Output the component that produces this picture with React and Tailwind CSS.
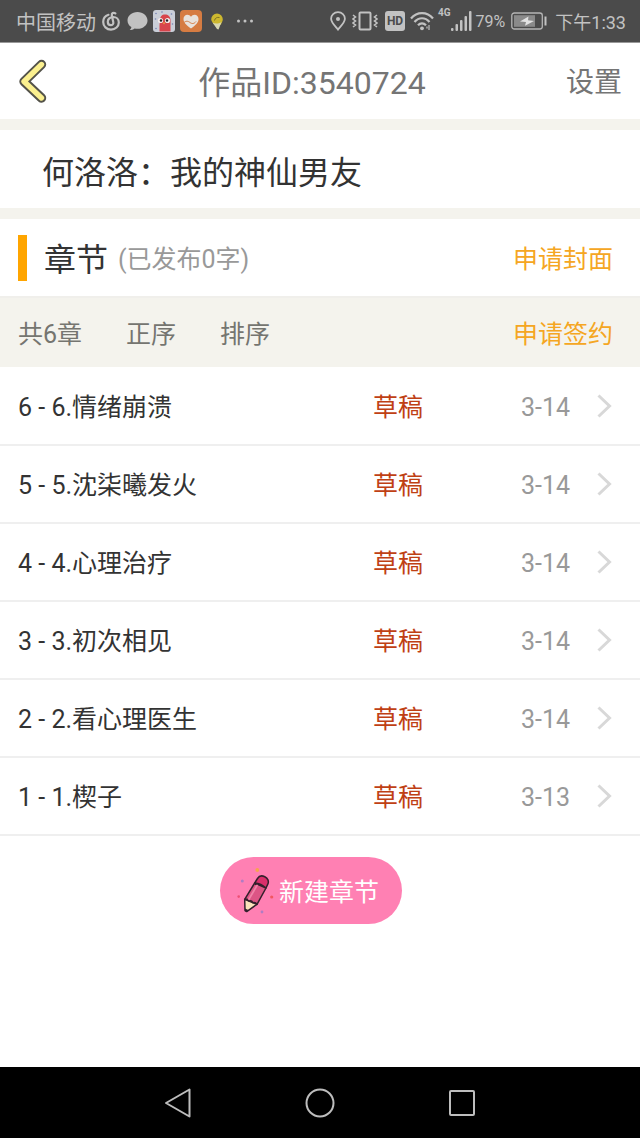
const chapters = [
  { no: 6, title: "6.情绪崩溃", status: "草稿", date: "3-14" },
  { no: 5, title: "5.沈柒曦发火", status: "草稿", date: "3-14" },
  { no: 4, title: "4.心理治疗", status: "草稿", date: "3-14" },
  { no: 3, title: "3.初次相见", status: "草稿", date: "3-14" },
  { no: 2, title: "2.看心理医生", status: "草稿", date: "3-14" },
  { no: 1, title: "1.楔子", status: "草稿", date: "3-13" },
]

function StatusBar() {
  return (
    <div className="flex h-[42px] items-center justify-between bg-[#4b4b4b] pl-4 pr-[14px] text-[#c2c2c2]">

      <div className="flex items-center">
        <span className="pt-1 text-[20px] leading-6">中国移动</span>

        {/* music */}
        <svg className="ml-1.5 h-5 w-[18px]" viewBox="0 0 18 20" fill="none" stroke="currentColor" strokeWidth="2.200" strokeLinecap="round">
          <path d="M6.500 3.800C3.400 4.800 1.200 7.600 1.200 11c0 4.300 3.400 7.600 7.800 7.600s7.800-3.100 7.800-7.100c0-3.200-2.400-5.500-5.600-5.500-3.200 0-5.400 2-5.400 4.700 0 2.200 1.400 3.500 3 3.500s2.800-1.200 2.500-2.900L9.800 4.300C9.500 2.300 11.500 1 13.400 2.400" />
        </svg>

        {/* message bubble */}
        <svg className="ml-[7px] h-5 w-[21px]" viewBox="0 0 21 20" fill="currentColor">
          <path d="M10.500 1C4.800 1 .5 4.700.5 9.400c0 2.900 1.500 5.200 3.900 6.700-.2 1.200-.9 2.300-1.700 3 1.900-.1 3.600-.7 4.900-1.700.9.2 1.900.3 2.900.3 5.700 0 10-3.700 10-8.300S16.200 1 10.500 1z" />
        </svg>

        {/* bird app */}
        <svg className="ml-[5px] h-[22px] w-[22px]" viewBox="0 0 22 22">
          <rect width="22" height="22" rx="3" fill="#c9ced8" />
          <path d="M7 10c0-3.500 2-5.500 5-5.500s5.500 2 5.500 5.500v11.500H6.500V15z" fill="#d8454c" />
          <circle cx="7.500" cy="10.500" r="2.600" fill="#f3e9e9" />
          <circle cx="14.500" cy="10.500" r="2.600" fill="#f3e9e9" />
          <circle cx="8" cy="10.500" r="1.200" fill="#222" />
          <circle cx="14" cy="10.500" r="1.200" fill="#222" />
          <path d="M9.500 12.500h3l-1.500 2z" fill="#e9a23b" />
          <g fill="#7684b5">
            <circle cx="3" cy="3.500" r=".8" />
            <circle cx="9" cy="2" r=".8" />
            <circle cx="18.500" cy="4" r=".8" />
            <circle cx="2.500" cy="9" r=".8" />
            <circle cx="19.500" cy="14" r=".8" />
            <circle cx="3" cy="18.500" r=".8" />
          </g>
        </svg>

        {/* health app */}
        <svg className="ml-[5px] h-[22px] w-[22px]" viewBox="0 0 22 22">
          <rect width="22" height="22" rx="4" fill="#d67c42" />
          <path d="M11 18.500C6 15 3.500 12.300 3.500 9c0-2.500 1.700-4.300 3.900-4.300 1.500 0 2.800.8 3.600 2 .8-1.200 2.100-2 3.600-2 2.200 0 3.900 1.800 3.900 4.300 0 3.300-2.500 6-7.500 9.500z" fill="#e8e2dc" />
          <path d="M3.500 13c2.500-2.500 4.500-2 6.500-.5s4 1.500 6-1" fill="none" stroke="#d67c42" strokeWidth="1" />
        </svg>

        {/* bulb */}
        <svg className="ml-2 h-[18px] w-[14px]" viewBox="0 0 14 18">
          <path d="M7 1.500a5.800 5.800 0 0 1 5.800 5.800c0 2.200-1.300 3.500-1.800 5.200L8 14l-4-1.500C3 11 1.200 9.500 1.200 7.300A5.800 5.800 0 0 1 7 1.500z" fill="#cdb82f" />
          <path d="M2.500 10.500c2.500 1.500 6 1.500 9-.5L8.500 17.500l-1.500-.5z" fill="#d8d8b4" />
          <path d="M4.500 8.500C5 6 7 5 9.500 5.500" fill="none" stroke="#7d7124" strokeWidth="1" />
        </svg>

        <svg className="ml-3 h-1 w-[18px]" viewBox="0 0 18 4" fill="currentColor">
          <circle cx="2.500" cy="2" r="1.500" />
          <circle cx="9" cy="2" r="1.500" />
          <circle cx="15.500" cy="2" r="1.500" />
        </svg>
      </div>

      <div className="flex items-center">
        {/* location */}
        <svg className="h-5 w-4" viewBox="0 0 16 20" fill="none" stroke="currentColor" strokeWidth="1.800">
          <path d="M8 18.600C4.500 14.500 1.100 11.300 1.100 7.800 1.100 4 4.100 1.200 8 1.200s6.900 2.800 6.900 6.600c0 3.500-3.400 6.700-6.900 10.800z" />
          <circle cx="8" cy="8" r="2" fill="currentColor" stroke="none" />
        </svg>

        {/* vibrate */}
        <svg className="ml-1.5 h-5 w-[26px]" viewBox="0 0 26 20" fill="none" stroke="currentColor" strokeWidth="2">
          <rect x="7.500" y="1.500" width="11" height="17" rx="1" />
          <path d="M1 4l2.500 2L1 8l2.500 2L1 12l2.500 2L1 16M25 4l-2.500 2L25 8l-2.500 2 2.500 2-2.500 2 2.500 2" strokeWidth="1.600" />
        </svg>

        <span className="ml-[7px] flex h-5 w-5 items-center justify-center rounded-[3px] bg-[#c2c2c2] text-[12px] font-bold leading-none text-[#4b4b4b]">
          HD
        </span>

        {/* wifi */}
        <svg className="ml-[5px] h-5 w-6" viewBox="0 0 24 20" fill="none" stroke="currentColor" strokeWidth="2.200">
          <path d="M1 7.500C7 .2 17 .2 23 7.500M4.500 11c4.300-5 10.700-5 15 0M8 14.300c2.300-2.600 5.700-2.600 8 0" />
          <circle cx="12" cy="17.300" r="1.900" fill="currentColor" stroke="none" />
          <path d="M19 14v5M17 15.500v2" strokeWidth="1.200" />
        </svg>

        <span className="ml-1 self-start text-[10px] font-bold leading-3">4G</span>

        {/* signal */}
        <svg className="h-5 w-[21px]" viewBox="0 0 21 20" fill="currentColor">
          <rect x="0" y="17" width="2.500" height="3" rx="1" />
          <rect x="4.500" y="13" width="2.500" height="7" rx="1" />
          <rect x="9" y="9" width="2.500" height="11" rx="1" />
          <rect x="13.500" y="5" width="2.500" height="15" rx="1" />
          <rect x="18" y="0" width="2.500" height="20" rx="1" />
        </svg>

        <span className="ml-1 pt-0.5 text-[16px] leading-6">79%</span>

        {/* battery */}
        <svg className="ml-1.5 h-[18px] w-9" viewBox="0 0 36 18" fill="none">
          <rect x=".8" y="1" width="30.500" height="16" rx="2.500" stroke="#b5b5b5" strokeWidth="1.300" />
          <rect x="3" y="3.200" width="21" height="11.600" fill="#8a8a8a" />
          <path d="M17.500 4.500L9 9.500l6 .5-1 3.800L23 9l-6-.8z" fill="#e2e2e2" />
          <path d="M34.500 4.500v9" stroke="#c2c2c2" strokeWidth="2" />
        </svg>

        <span className="ml-2 pt-1 text-[18px] leading-6">下午1:33</span>
      </div>

    </div>
  )
}

function PencilIcon() {
  return (
    <svg className="h-[48px] w-10" viewBox="0 0 40 48">
      <g strokeLinejoin="round" stroke="#33202c" strokeWidth="1.500">
        <path d="M9.700 32.300L22 37.300 11.700 44.600 10 43.500z" fill="#fbe3bb" />
        <path d="M9.700 32.300L19.700 16 31 21 22 37.300c-1-1.500-2.500-2-4-1.500-.8-1.500-2.500-2.300-4-1.700-1-1.600-2.700-2.300-4.300-1.800z" fill="#dc5585" />
        <path d="M19.700 16l2.800-4.500C24 9 27 8.400 29.800 9.700c3 1.400 4.400 4.600 3 7.500L31 21c-3-2.800-7-4.600-11.300-5z" fill="#d92f6b" />
      </g>
      <path d="M10 41.500l3.300 1.400-1.800 2L10 43.800z" fill="#33202c" />
      <path d="M14 32l8-13.500" stroke="#f083a8" strokeWidth="1.800" strokeLinecap="round" />
      <circle cx="22.300" cy="3" r="1.900" fill="#f7a34e" />
      <circle cx="7.300" cy="14" r="1.500" fill="#b07bc4" />
      <circle cx="3.700" cy="29.600" r="1.300" fill="#ee4f74" />
      <circle cx="36.700" cy="30" r="1.600" fill="#f2565f" />
      <circle cx="27" cy="45" r="1.400" fill="#b07bc4" />
    </svg>
  )
}

function App() {
  return (
    <div className="flex min-h-screen flex-col bg-white font-[Roboto,'Noto_Sans_CJK_SC',sans-serif] text-[25px] leading-8 text-[#333]">

      <StatusBar />

      {/* Header */}
      <header className="flex h-[77px] items-center justify-between border-t border-[#999] bg-white px-[18px] text-[#757575]">
        <button aria-label="返回" className="w-10">
          <svg className="h-11 w-[30px]" viewBox="0 0 30 44" fill="none" strokeLinecap="round" strokeLinejoin="round">
            <path d="M23.500 5.500L6 22.500 23.500 39" stroke="#54534a" strokeWidth="9.400" />
            <path d="M23.500 5.500L6 22.500 23.500 39" stroke="#fbf08f" strokeWidth="5.400" />
          </svg>
        </button>
        <h1 className="pt-1 text-[32px] leading-10">作品ID:3540724</h1>
        <button className="pt-1 text-[28px] leading-10">设置</button>
      </header>

      {/* Book title */}
      <div className="border-y-[11px] border-[#f4f3ed] pl-[42px]">
        <h2 className="flex h-[78px] items-center pt-2 text-[32px] leading-10">何洛洛：我的神仙男友</h2>
      </div>

      {/* Chapter heading */}
      <div className="flex h-[77px] items-center pl-[18px] pr-[27px]">
        <span className="h-[46px] w-[9px] bg-[#ffa500]" />
        <h3 className="ml-[17px] pt-1 text-[32px] leading-10">章节</h3>
        <span className="ml-2.5 pt-1 text-[#999]">(已发布0字)</span>
        <a href="#cover" className="ml-auto pt-1 text-[#f5a623]">申请封面</a>
      </div>

      <div className="flex h-[71px] items-center gap-11 border-t-2 border-[#f0efeb] bg-[#f4f3ed] pl-[18px] pr-[27px] pt-1 text-[#757570]">
        <span>共6章</span>
        <button>正序</button>
        <button>排序</button>
        <a href="#sign" className="ml-auto text-[#f5a623]">申请签约</a>
      </div>

      {/* Chapter list */}
      <ul className="pt-px">
        {chapters.map((item) => (
          <li key={item.no} className="border-b-2 border-[#efefef]">
            <a href={`#chapter-${item.no}`} className="flex h-[76px] items-center pr-7 pl-[18px]">
              <span className="flex-1 pt-1">{item.no} - {item.title}</span>
              <span className="w-[148px] pt-1 text-[#bf4014]">{item.status}</span>
              <span className="w-[76px] pt-1 text-[#999]">{item.date}</span>
              <svg className="h-6 w-[15px]" viewBox="0 0 15 24" fill="none" stroke="#d8d8d8" strokeWidth="3">
                <path d="M1.500 1.500L12.500 12 1.500 22.500" />
              </svg>
            </a>
          </li>
        ))}
      </ul>

      <div className="flex justify-center pt-[21px] pr-[18px] pb-8">
        <button className="flex h-[67px] items-center gap-1 rounded-full bg-[#ff80b3] pl-[15px] pr-[23px] text-white">
          <PencilIcon />
          <span className="pt-1">新建章节</span>
        </button>
      </div>

      {/* System navigation */}
      <nav className="mt-auto flex h-[71px] items-center justify-center gap-28 bg-black text-[#bdbdbd]">
        <button aria-label="后退">
          <svg className="size-[30px]" viewBox="0 0 30 30" fill="none" stroke="currentColor" strokeWidth="2" strokeLinejoin="round">
            <path d="M26.500 1.500v27L3 15z" />
          </svg>
        </button>
        <button aria-label="主页">
          <svg className="size-[30px]" viewBox="0 0 30 30" fill="none" stroke="currentColor" strokeWidth="2">
            <circle cx="15" cy="15" r="13.500" />
          </svg>
        </button>
        <button aria-label="最近任务">
          <svg className="size-[30px]" viewBox="0 0 30 30" fill="none" stroke="currentColor" strokeWidth="2">
            <rect x="3" y="3" width="24" height="24" rx="1" />
          </svg>
        </button>
      </nav>

    </div>
  )
}

export default App
